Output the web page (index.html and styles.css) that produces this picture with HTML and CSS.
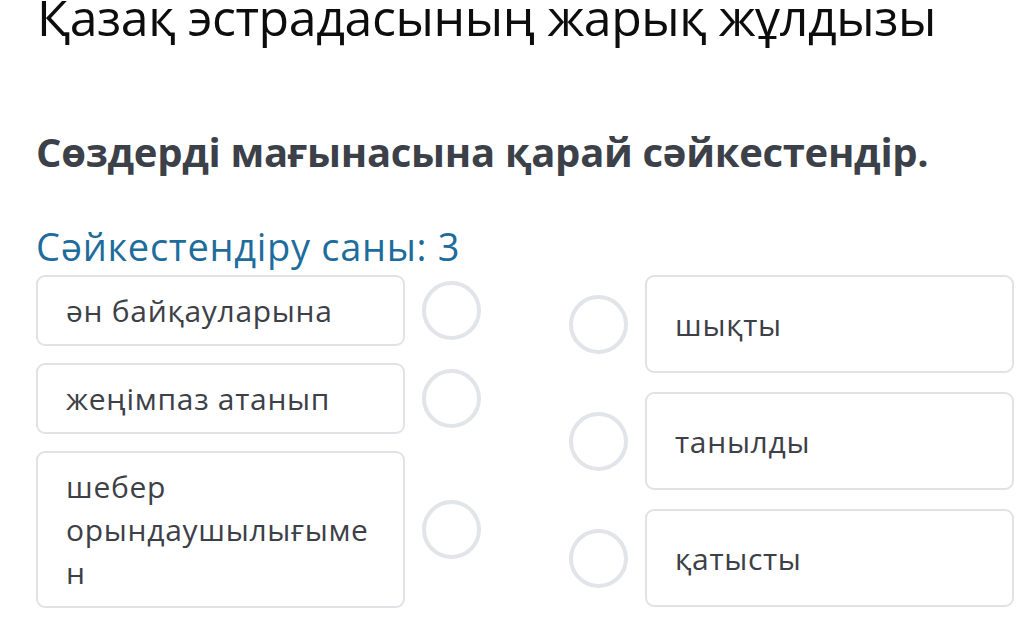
FILE: index.html
```html
<!DOCTYPE html>
<html lang="kk">
<head>
<meta charset="utf-8">
<title>Сәйкестендіру</title>
<link rel="stylesheet" href="styles.css">
</head>
<body>
<div class="page">
  <h1 class="title">Қазақ эстрадасының жарық жұлдызы</h1>
  <h2 class="task">Сөздерді мағынасына қарай сәйкестендір.</h2>
  <div class="count">Сәйкестендіру саны: 3</div>
  <div class="match">
    <div class="col col-left">
      <div class="row">
        <div class="box">ән байқауларына</div>
        <span class="dot"></span>
      </div>
      <div class="row">
        <div class="box">жеңімпаз атанып</div>
        <span class="dot"></span>
      </div>
      <div class="row">
        <div class="box">шебер орындаушылығымен</div>
        <span class="dot"></span>
      </div>
    </div>
    <div class="col col-right">
      <div class="row">
        <span class="dot"></span>
        <div class="box box-r">шықты</div>
      </div>
      <div class="row">
        <span class="dot"></span>
        <div class="box box-r">танылды</div>
      </div>
      <div class="row">
        <span class="dot"></span>
        <div class="box box-r">қатысты</div>
      </div>
    </div>
  </div>
</div>
</body>
</html>
```

FILE: styles.css
```css
* { box-sizing: border-box; }
html, body { margin: 0; padding: 0; background: #ffffff; overflow: hidden; }
body { font-family: "Open Sans", "Noto Sans", sans-serif; }

.page {
  width: 1017px;
  height: 642px;
  padding-left: 36px;
}

.title {
  margin: -13px 0 0 1px;
  font-size: 50px;
  font-weight: 400;
  line-height: 60px;
  color: #0d0d0d;
  letter-spacing: -0.4px;
}

.task {
  margin: 79px 0 0 0;
  font-size: 40px;
  font-weight: 700;
  line-height: 52px;
  color: #3b4049;
  letter-spacing: -0.3px;
}

.count {
  margin-top: 44px;
  font-size: 38px;
  line-height: 48px;
  color: #1e6c9c;
  letter-spacing: 0.7px;
}

.match {
  display: flex;
  gap: 88px;
  margin-top: 5px;
}

.col {
  display: flex;
  flex-direction: column;
}
.col-left { gap: 17px; }
.col-right { gap: 19px; }

.row {
  display: flex;
  align-items: center;
  gap: 17px;
}

.box {
  width: 369px;
  border: 2px solid #e0e2e5;
  border-radius: 9px;
  padding: 12px 26px 12px 28px;
  font-size: 30px;
  line-height: 43px;
  color: #3d4047;
  letter-spacing: 0.7px;
  overflow-wrap: anywhere;
  background: #fff;
}

.box-r {
  height: 98px;
  display: flex;
  align-items: center;
}

.dot {
  flex: none;
  width: 59px;
  height: 59px;
  border: 4px solid #e1e4e8;
  border-radius: 50%;
}
```
